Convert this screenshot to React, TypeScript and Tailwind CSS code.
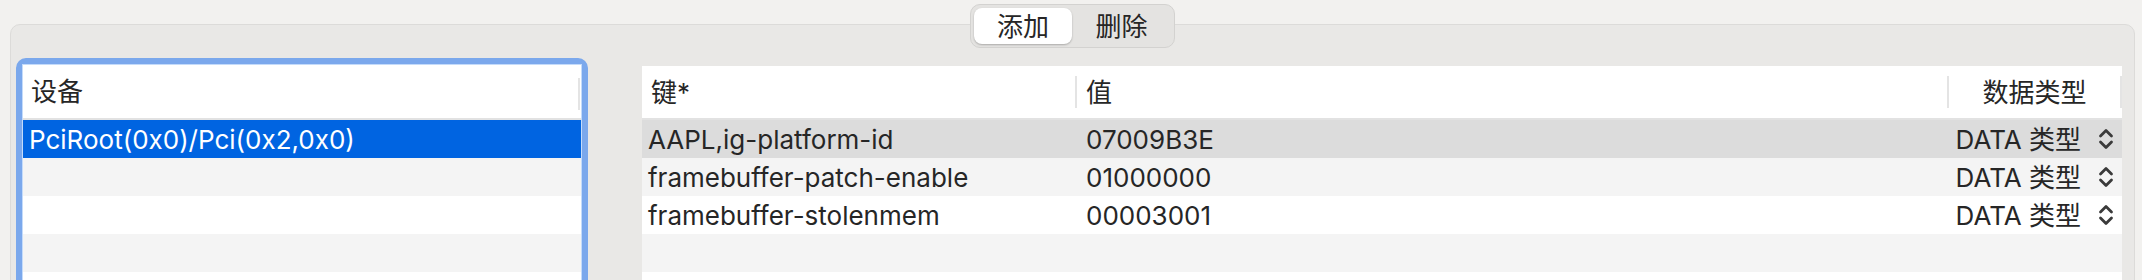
import React from 'react'

const FONT = "font-['Inter','Noto_Sans_CJK_SC',sans-serif]"

interface Prop {
  key: string
  value: string
  type: string
}

const PROPS: Prop[] = [
  { key: 'AAPL,ig-platform-id', value: '07009B3E', type: 'DATA 类型' },
  { key: 'framebuffer-patch-enable', value: '01000000', type: 'DATA 类型' },
  { key: 'framebuffer-stolenmem', value: '00003001', type: 'DATA 类型' },
  { key: '', value: '', type: '' },
  { key: '', value: '', type: '' },
]

const DEVICES = ['PciRoot(0x0)/Pci(0x2,0x0)', '', '', '', '']

function UpDown() {
  return (
    <svg width="16" height="24" viewBox="0 0 16 24" className="shrink-0">
      <path d="M2.5 9 L8 3.5 L13.5 9" fill="none" stroke="#3a3a3a" strokeWidth="2.8" strokeLinecap="round" strokeLinejoin="round" />
      <path d="M2.5 15 L8 20.5 L13.5 15" fill="none" stroke="#3a3a3a" strokeWidth="2.8" strokeLinecap="round" strokeLinejoin="round" />
    </svg>
  )
}

function rowBg(i: number) {
  return i % 2 === 1 ? 'bg-[#f4f4f4]' : 'bg-white'
}

export default function App() {
  return (
    <div className={`relative w-[2142px] h-[280px] overflow-hidden bg-[#f2f1ef] text-[26px] text-[#262626] ${FONT}`}>
      {/* tab panel */}
      <div className="mt-[24px] ml-[10px] mr-[7px] h-[300px] rounded-t-[10px] border border-[#dcdbd9] bg-[#e9e8e6] flex items-start pt-[33px] pl-[5px] pr-[12px]">
        {/* device list */}
        <div className="w-[572px] shrink-0 rounded-[10px] border-[6px] border-[#7ba8ec] bg-[#7ba8ec]">
          <div className="border border-[#c4dbfa] bg-white">
            <div className="relative h-[55px] flex items-center pl-[8px] border-b-2 border-[#e2e2e2]">
              <span>设备</span>
              <div className="absolute right-[1px] top-[13px] h-[32px] w-[2px] bg-[#e4e4e4]" />
            </div>
            {DEVICES.map((d, i) => (
              <div
                key={i}
                className={`h-[38px] flex items-center pl-[6px] ${i === 0 ? 'bg-[#0064e1] text-white' : rowBg(i)}`}
              >
                {d}
              </div>
            ))}
          </div>
        </div>

        {/* properties table */}
        <div className="ml-[54px] mt-[8px] flex-1 bg-white">
          <div className="h-[54px] flex items-center border-b-2 border-[#e2e2e2]">
            <div className="w-[433px] pl-[9px]">键*</div>
            <div className="w-[2px] h-[32px] bg-[#e4e4e4]" />
            <div className="flex-1 pl-[9px]">值</div>
            <div className="w-[2px] h-[32px] bg-[#e4e4e4]" />
            <div className="w-[171px] text-center">数据类型</div>
            <div className="w-[2px] h-[32px] bg-[#e4e4e4]" />
          </div>
          {PROPS.map((p, i) => (
            <div
              key={i}
              className={`h-[38px] flex items-center ${i === 0 ? 'bg-[#dcdcdc]' : rowBg(i)}`}
            >
              <div className="w-[433px] pl-[6px] whitespace-nowrap">{p.key}</div>
              <div className="flex-1 pl-[11px]">{p.value}</div>
              {p.type && (
                <div className="w-[175px] flex items-center justify-end gap-[17px] pr-[8px]">
                  <span className="whitespace-nowrap">{p.type}</span>
                  <UpDown />
                </div>
              )}
            </div>
          ))}
        </div>
      </div>

      {/* segmented control over the panel edge */}
      <div className="absolute left-[970px] top-[4px] h-[44px] w-[205px] flex items-center p-[3px] rounded-[10px] border border-[#d3d2d0] bg-[#e4e3e1]">
        <div className="h-full w-[98px] flex items-center justify-center rounded-[8px] bg-white shadow-[0_1px_2px_rgba(0,0,0,0.25)]">
          添加
        </div>
        <div className="flex-1 flex items-center justify-center">删除</div>
      </div>
    </div>
  )
}
